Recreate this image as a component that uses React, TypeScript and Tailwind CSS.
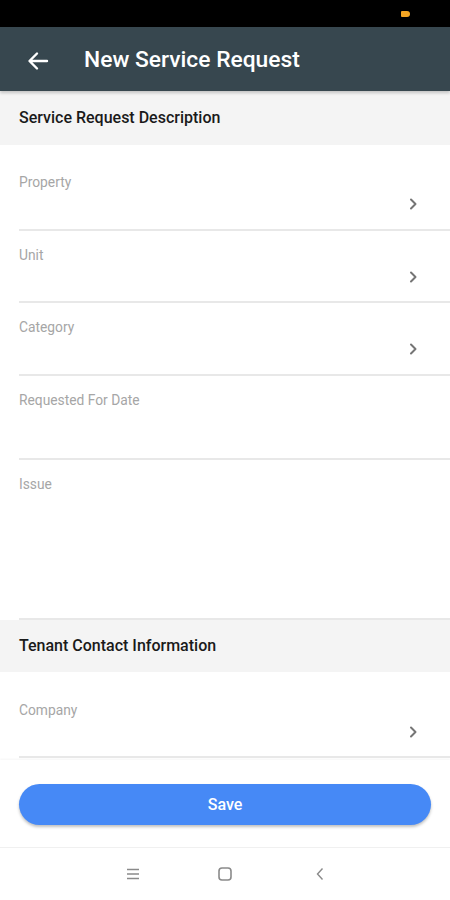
import React from "react";

const Chevron = () => (
  <svg width="10" height="14" viewBox="0 0 10 14" className="block">
    <path d="M3 2.5 L7.5 7 L3 11.5" fill="none" stroke="#757575" strokeWidth="2" strokeLinecap="round" strokeLinejoin="round" />
  </svg>
);

const Row = ({ label, chevron = true, pt = "pt-[16px]", h }: { label: string; chevron?: boolean; pt?: string; h: string }) => (
  <div className={`ml-[19px] border-b-2 border-[#e8e8e8] ${h} ${pt} flex flex-col`}>
    <div className="text-[13.8px] leading-[16px] text-[#a6a6a6]">{label}</div>
    {chevron && (
      <div className="flex justify-end pr-[32px] mt-[7px]">
        <Chevron />
      </div>
    )}
  </div>
);

export default function App() {
  return (
    <div className="w-[450px] h-[900px] flex flex-col bg-white overflow-hidden" style={{ fontFamily: "Roboto, 'Noto Sans', sans-serif" }}>
      {/* status bar */}
      <div className="h-[27px] bg-black flex items-center justify-end pr-[40px]">
        <div className="w-[9px] h-[6px] bg-[#f5a623] rounded-r-[3px] rounded-l-[1px]" />
      </div>
      {/* app bar */}
      <div className="h-[64px] bg-[#37474f] flex items-center pt-[3px] shadow-[0_2px_3px_rgba(0,0,0,0.2)] z-10">
        <div className="w-[84px] pl-[27px] flex items-center">
          <svg width="22" height="20" viewBox="0 0 22 20">
            <path d="M20 10 H3 M10 2.5 L2.5 10 L10 17.5" fill="none" stroke="white" strokeWidth="2.4" strokeLinecap="round" strokeLinejoin="round" />
          </svg>
        </div>
        <div className="text-white text-[22.8px] font-medium leading-none">New Service Request</div>
      </div>
      {/* content */}
      <div className="flex-1 flex flex-col">
        <div className="h-[54px] bg-[#f4f4f4] flex items-center pl-[19px]">
          <span className="text-[16px] font-medium text-[#1a1a1a]">Service Request Description</span>
        </div>
        <Row label="Property" pt="pt-[29px]" h="h-[86px]" />
        <Row label="Unit" h="h-[72px]" />
        <Row label="Category" h="h-[73px]" />
        <Row label="Requested For Date" chevron={false} h="h-[84px]" />
        <Row label="Issue" chevron={false} h="h-[160px]" />
        <div className="h-[52px] bg-[#f4f4f4] flex items-center pl-[19px]">
          <span className="text-[16px] font-medium text-[#1a1a1a]">Tenant Contact Information</span>
        </div>
        <Row label="Company" pt="pt-[30px]" h="h-[86px]" />
      </div>
      {/* bottom save */}
      <div className="h-[87px] bg-white flex items-center px-[19px] shadow-[0_-1px_2px_rgba(0,0,0,0.04)]">
        <button className="w-[413px] h-[41px] mt-[2px] rounded-full bg-[#4689f6] text-white text-[16px] font-medium shadow-[0_2px_3px_rgba(0,0,0,0.25)]">
          Save
        </button>
      </div>
      {/* nav bar */}
      <div className="h-[53px] border-t border-[#f0f0f0] bg-white flex items-center pl-[123px]">
        <div className="w-[20px] flex justify-center">
          <svg width="14" height="12" viewBox="0 0 14 12">
            <path d="M1 1.5 H13 M1 6 H13 M1 10.5 H13" stroke="#8a8a8a" strokeWidth="1.5" />
          </svg>
        </div>
        <div className="w-[20px] flex justify-center ml-[72px]">
          <svg width="14" height="14" viewBox="0 0 14 14">
            <rect x="1" y="1" width="12" height="12" rx="3" fill="none" stroke="#8a8a8a" strokeWidth="1.6" />
          </svg>
        </div>
        <div className="w-[20px] flex justify-center ml-[75px]">
          <svg width="10" height="14" viewBox="0 0 10 14">
            <path d="M7.5 1.5 L2.5 7 L7.5 12.5" fill="none" stroke="#8a8a8a" strokeWidth="1.4" />
          </svg>
        </div>
      </div>
    </div>
  );
}
